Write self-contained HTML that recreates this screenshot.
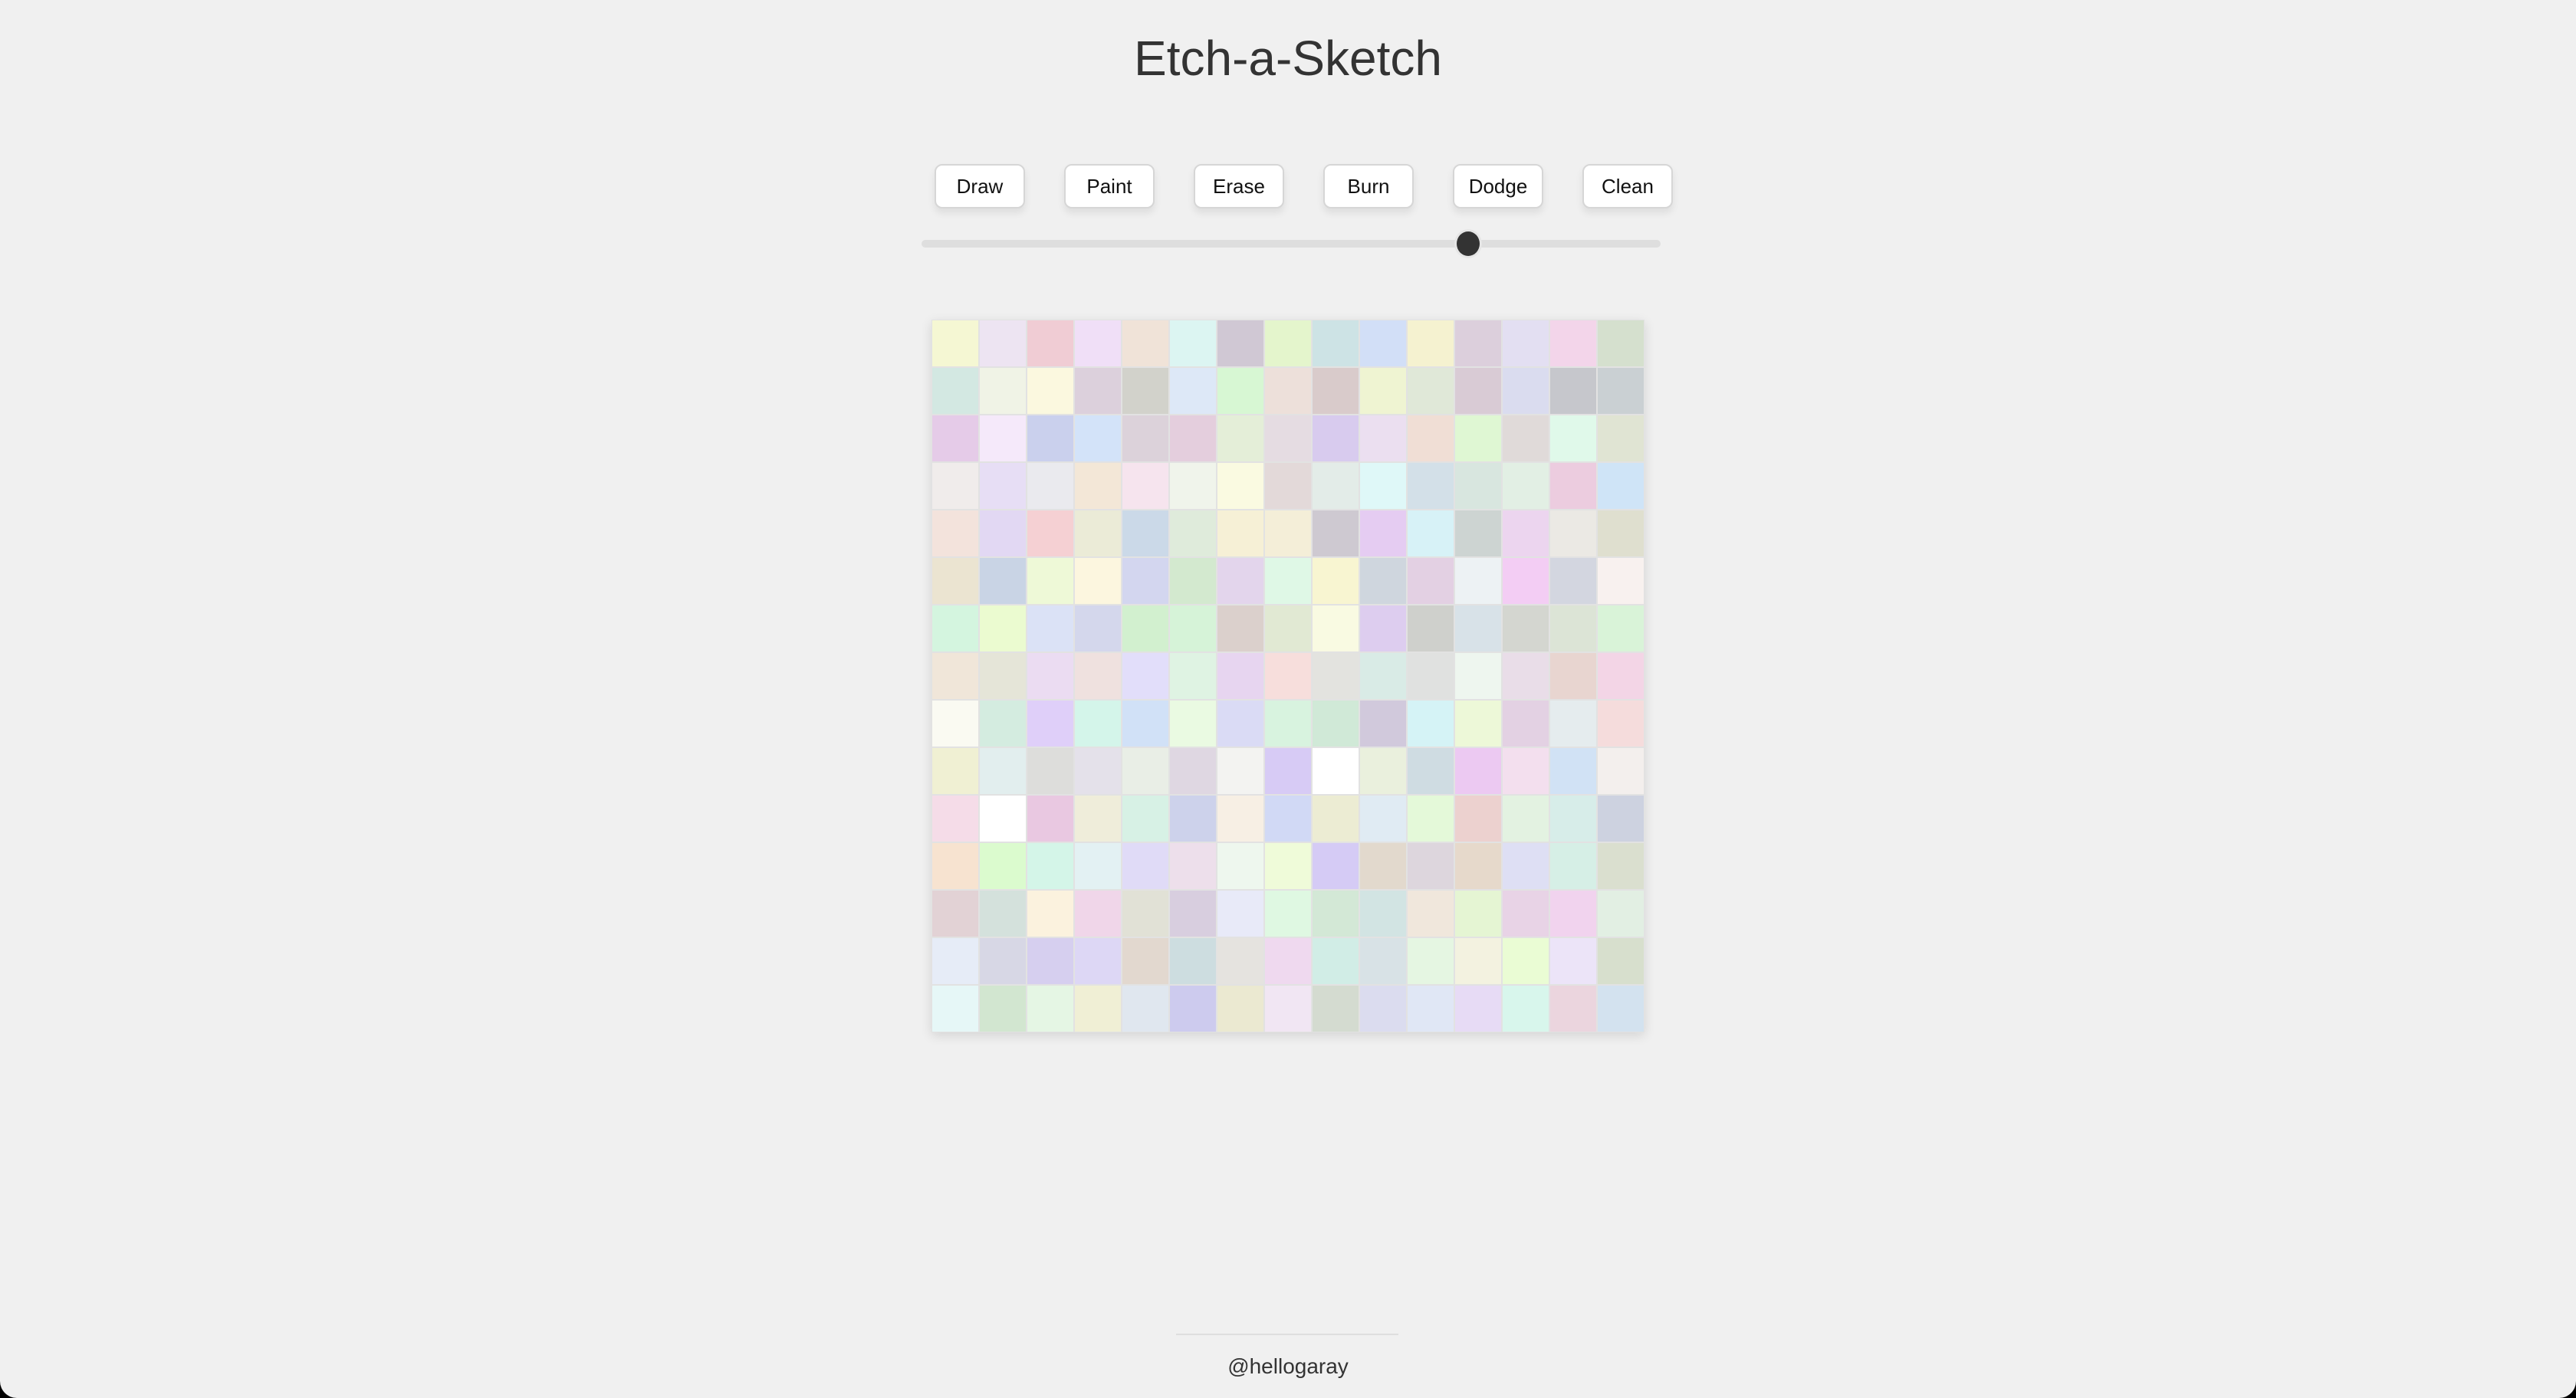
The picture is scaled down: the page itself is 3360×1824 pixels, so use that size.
<!DOCTYPE html>
<html><head><meta charset="utf-8"><style>
html,body{margin:0;padding:0;background:#000;}
.page{width:3360px;height:1824px;background:#f0f0f0;position:relative;overflow:hidden;border-radius:0 0 22px 22px;font-family:"Liberation Sans",Arial,sans-serif;color:#333;}
h1{position:absolute;left:0;right:0;top:36px;margin:0;text-align:center;font-weight:400;font-size:64px;line-height:80px;color:#333;}
.btn{position:absolute;top:214px;width:118px;height:58px;box-sizing:border-box;background:#fff;border:2px solid #d6d6d6;border-radius:10px;box-shadow:0 6px 10px rgba(0,0,0,0.08);font-size:26px;line-height:54px;text-align:center;color:#111;}
.track{position:absolute;left:1202px;top:313px;width:964px;height:10px;border-radius:5px;background:#dedede;}
.thumb{position:absolute;left:1900px;top:302px;width:30px;height:32px;border-radius:50%;background:#333;box-shadow:0 0 0 3px #e6e6e6;}
.grid{position:absolute;left:1215px;top:417px;width:930px;height:930px;box-sizing:border-box;padding:1px;background:#e2e2e2;display:grid;grid-template-columns:repeat(15,60px);grid-auto-rows:60px;gap:2px;box-shadow:0 4px 14px rgba(0,0,0,0.12);}
.grid div{width:60px;height:60px;}
.line{position:absolute;left:1534px;top:1740px;width:290px;height:2px;background:#dedede;}
.foot{position:absolute;left:0;right:0;top:1765px;text-align:center;font-size:28px;line-height:36px;color:#333;}
</style></head><body><div class="page">
<h1>Etch-a-Sketch</h1>
<div class="btn" style="left:1219px">Draw</div>
<div class="btn" style="left:1388px">Paint</div>
<div class="btn" style="left:1557px">Erase</div>
<div class="btn" style="left:1726px">Burn</div>
<div class="btn" style="left:1895px">Dodge</div>
<div class="btn" style="left:2064px">Clean</div>
<div class="track"></div><div class="thumb"></div>
<div class="grid" id="g"></div>
<div class="line"></div>
<div class="foot">@hellogaray</div>
</div>
<script>
var c="f5f7d3 ede4f2 f0ccd4 f0dff7 f0e3d8 dcf5f2 d0c8d4 e4f5cc cde3e5 d2dff7 f5f2d0 dccfdc e3dff2 f3d5ea d5e0ce d3e8e2 f0f3e6 fbf8df dcd0dc d2d2cb dde8f7 d7f7d3 ede0da d9cbcb eff4d2 e0e8d8 d9cbd5 dadcef c6c7cc cad0d3 e5cbe8 f5e9fa cad0ed d3e3f9 dcd2da e4cedd e4eed8 e5dce2 d8cbee ebdff0 f0ded5 dff7d3 e0dad9 e0f9ea e0e4d3 f0eceb e7def5 eaeaee f3e7d7 f6e4ee f0f4eb fafae1 e3d9d9 e3ece8 dff8f8 d3e0e8 d8e6df e2efe4 ecccdf cfe4f7 f3e3dc e2d8f3 f5d0d3 ebebd7 cbd9e8 dfebdb f6f0d6 f4eed8 cec9d1 e5ccf2 d7f2f7 cdd4d2 ecd5ef ebe9e4 dfdfcf ebe4d1 c9d4e5 eef9d7 fcf6df d3d6ef d3e9cf e3d5ec dff8e6 f8f5d1 cfd6de e3d0e3 edf2f4 f3cdf4 d3d6e0 f8f1ef d4f5df ebfbd0 dbe2f6 d4d7ec d2f0cf d6f3d8 dbd0cc e1e9d3 f9fae2 ddcdef cfd0cc d8e2e8 d4d6d0 dce4d6 d9f3d8 f0e6d9 e5e5d8 ebdcf2 efe1df e2defa dff3e3 e7d5f0 f7dedc e3e3df d9ebe6 e0e1e0 eef6ef e9dde8 e8d5d0 f3d5e6 fafaf2 d4ece0 dfcff9 d4f5ea d1e1f7 eafae2 dadbf5 d8f3df d0e9d7 d1c9dc d5f3f6 edf8d8 e3d1e3 e5ecee f5dcdc f0f0d3 e2eeee dddddb e4e1ea e9eee6 dfd7e2 f3f3f1 d7cbf5 ffffff eaf0dd cfdce2 ecc9f2 f3dfee d1e2f5 f3efed f5dce8 ffffff e9c8e1 efedda d7f1e5 cdd2eb f7efe4 d1d9f5 ececd3 e0ebf3 e4f9d9 ecd1cf e3f2e1 d7ede9 cdd2e0 f7e3d0 dbfbce d4f5e8 e3f1f3 e0dbf7 eddfeb eef7ee effbd9 d5cbf5 e2d9cd ddd6dd e6d9cb dedff4 d6efe6 dadfcf e2d2d5 d4e1dc fbf2de f0d6e9 e1e1d6 d8cedf e8eaf8 dff8e2 d3e8d6 d2e4e3 f0e7dc e5f5d3 e8d3e6 f1d3ee e2efe3 e6ecf7 d7d7e5 d6cfef ddd7f5 e2d8cf cddde0 e5e3df efd9ef d1ede6 d8e2e6 e5f6e2 f3f2e0 eafcd4 ece4f8 d7dfcd e6f7f7 d2e6d0 e5f6e4 f0efd5 e0e7ef cdcbee ebe9d1 f1e6f3 d4dbd0 dbdcef e0e7f5 e7dbf5 d8f6ec ebd5de d3e2ef".split(" ");
var h="";for(var i=0;i<c.length;i++)h+='<div style="background:#'+c[i]+'"></div>';
document.getElementById("g").innerHTML=h;
</script>
</body></html>
